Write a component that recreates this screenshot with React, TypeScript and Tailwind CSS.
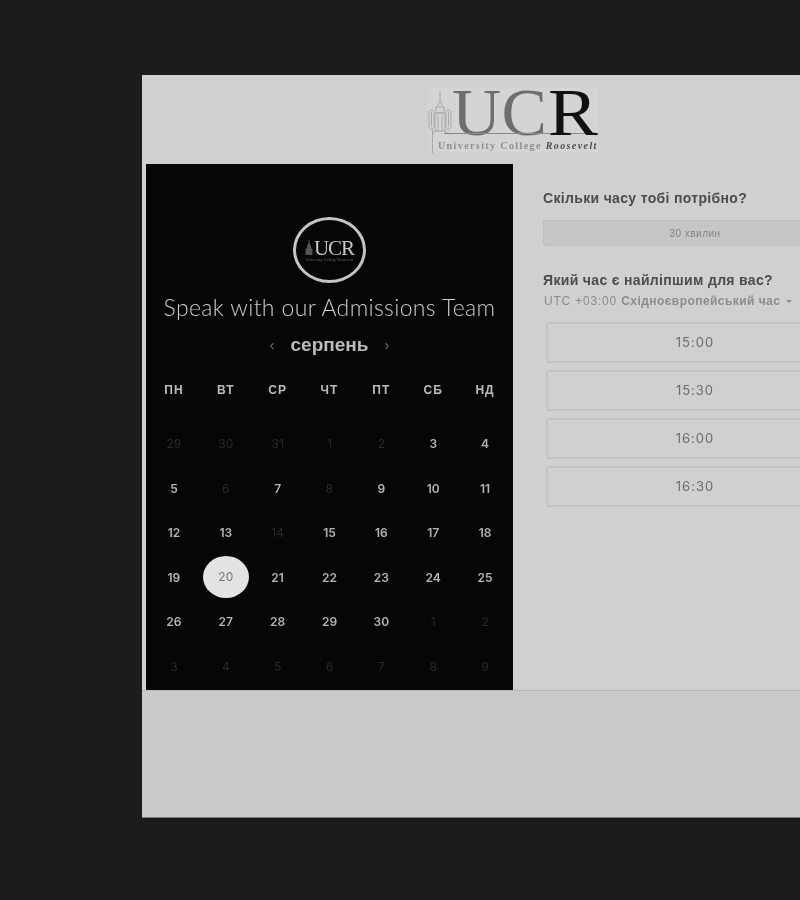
import React from "react";

type Day = { label: number; muted?: boolean; selected?: boolean };

const weekdays = ["ПН", "ВТ", "СР", "ЧТ", "ПТ", "СБ", "НД"];
const times = ["15:00", "15:30", "16:00", "16:30"];

const mutedAugust = [6, 8, 14];

const days: Day[] = [
  ...[29, 30, 31, 1, 2].map((label) => ({ label, muted: true })),
  ...Array.from({ length: 30 - 2 }, (_, i) => {
    const label = i + 3;
    return { label, muted: mutedAugust.includes(label), selected: label === 20 };
  }),
  ...[1, 2, 3, 4, 5, 6, 7, 8, 9].map((label) => ({ label, muted: true })),
];

const TowerIcon = ({ className }: { className: string }) => (
  <svg viewBox="0 0 24 62" className={className} fill="none" stroke="#a0a0a0" strokeWidth="0.8">
    <path d="M12 0v10M9 16l3-7 3 7M8 16h8v6H8zM7 22h10v18H7z" />
    <path d="M1 21c1.500-3 3.500-3 5 0v15c-1.500 3-3.500 3-5 0zM18 21c1.500-3 3.500-3 5 0v15c-1.500 3-3.500 3-5 0z" />
    <path d="M3.500 21v15M20.500 21v15M10 24v16M14 24v16M7 40l-2.500 4M17 40l4 3h3M4.500 38v24" />
  </svg>
);

const HeaderLogo = () => (
  <div className="flex h-[64px] w-[170px] items-start bg-[#d4d4d4]">
    <TowerIcon className="mt-[3px] h-[62px] w-[24px] shrink-0" />
    <div className="flex min-w-0 flex-col">
      <div className="mt-[1px] flex h-[47px] items-center font-['Liberation_Serif',serif] text-[68px] leading-[47px]">
        <span className="tracking-[0.5px] text-[#6e6e6e]">UC</span>
        <span className="ml-[1px] inline-block origin-left scale-x-[1.1] text-[#111111]">R</span>
      </div>
      <div className="-ml-[8px] -mt-[3px] h-px w-[150px] bg-[#8a8a8a]" />
      <div className="-ml-[14px] mt-[7px] whitespace-nowrap font-['Liberation_Serif',serif] text-[10px] font-bold leading-[10px] tracking-[1.4px] text-[#8f8f8f]">
        University College <span className="italic text-[#4c4c4c]">Roosevelt</span>
      </div>
    </div>
  </div>
);

const CalendarPanel = () => (
  <div className="flex h-[526px] w-[367px] shrink-0 flex-col items-center bg-[#060606] pt-[53px]">
    <div className="flex h-[66px] w-[73px] shrink-0 flex-col items-center justify-center rounded-[50%] border-[3px] border-[#c4c4c4]">
      <div className="flex items-center">
        <svg viewBox="0 0 8 15" className="h-[15px] w-[8px]" fill="#555555">
          <path d="M3.500 0h1v3l1.500 3v2l1.500 1v6h-7V9L2 8V6l1.500-3z" />
        </svg>
        <div className="ml-[1px] font-['Liberation_Serif',serif] text-[21px] leading-[18px] tracking-[-1px] text-[#c8c8c8]">
          UCR
        </div>
      </div>
      <div className="mt-[1px] whitespace-nowrap font-['Liberation_Serif',serif] text-[4px] leading-[4px] text-[#666666]">
        University College Roosevelt
      </div>
    </div>
    <div className="mt-[10px] whitespace-nowrap font-['Lato',sans-serif] text-[23px] font-light leading-[28px] tracking-[0.35px] text-[#cccccc]">
      Speak with our Admissions Team
    </div>
    <div className="mt-[12px] flex h-[24px] items-center gap-[16px]">
      <span className="font-['Liberation_Sans',sans-serif] text-[15px] text-[#6f6f6f]">‹</span>
      <span className="font-['Liberation_Sans',sans-serif] text-[19px] font-bold leading-[24px] text-[#bcbcbc]">серпень</span>
      <span className="font-['Liberation_Sans',sans-serif] text-[15px] text-[#6f6f6f]">›</span>
    </div>
    <div className="mt-[25px] grid w-[363px] grid-cols-7">
      {weekdays.map((day) => (
        <div key={day} className="text-center font-['Liberation_Sans',sans-serif] text-[12px] font-bold leading-[16px] tracking-[1px] text-[#bdbdbd]">
          {day}
        </div>
      ))}
    </div>
    <div className="mt-[24px] grid w-[363px] grid-cols-7 auto-rows-[44.500px]">
      {days.map((day, i) => (
        <div key={i} className="flex items-center justify-center">
          {day.selected ? (
            <div className="-mt-[1px] flex h-[42px] w-[46px] items-center justify-center rounded-[50%] bg-[#e3e3e3] font-['Inter',sans-serif] text-[12px] text-[#777777]">
              {day.label}
            </div>
          ) : (
            <span
              className={
                day.muted
                  ? "font-['Inter',sans-serif] text-[12px] text-[#2a2a2a]"
                  : "font-['Inter',sans-serif] text-[12px] font-semibold text-[#b4b4b4]"
              }
            >
              {day.label}
            </span>
          )}
        </div>
      ))}
    </div>
  </div>
);

const SchedulePanel = () => (
  <div className="w-[334px] shrink-0 pl-[30px] pt-[25px]">
    <div className="font-['Liberation_Sans',sans-serif] text-[14px] font-bold leading-[18px] tracking-[0.33px] text-[#4c4c4c]">
      Скільки часу тобі потрібно?
    </div>
    <div className="mt-[13px] flex h-[26px] w-[304px] items-center justify-center rounded-[2px] border border-[#bfbfbf] bg-[#c6c6c6] font-['Liberation_Sans',sans-serif] text-[10px] tracking-[0.5px] text-[#848484]">
      30 хвилин
    </div>
    <div className="mt-[25px] font-['Liberation_Sans',sans-serif] text-[14px] font-bold leading-[18px] tracking-[0.33px] text-[#4c4c4c]">
      Який час є найліпшим для вас?
    </div>
    <div className="ml-[1px] mt-[4px] flex items-center font-['Liberation_Sans',sans-serif] text-[12px] font-bold leading-[16px] tracking-[0.45px] text-[#8c8c8c]">
      <span className="font-normal tracking-[0.8px]">UTC +03:00&nbsp;</span>
      <span>Східноєвропейський час</span>
      <span className="ml-[6px] h-0 w-0 border-x-[3px] border-t-[3px] border-x-transparent border-t-[#8c8c8c]" />
    </div>
    <div className="ml-[3px] mt-[13px] flex w-[298px] flex-col gap-[7px]">
      {times.map((time) => (
        <div key={time} className="flex h-[41px] items-center justify-center rounded-[2px] border-2 border-[#c4c4c4] font-['Inter',sans-serif] text-[13px] tracking-[1px] text-[#6c6c6c]">
          {time}
        </div>
      ))}
    </div>
  </div>
);

export default function App() {
  return (
    <div className="flex h-[900px] w-[800px] overflow-hidden bg-[#1c1c1c] pl-[142px] pt-[75px]">
      <div className="flex h-[743px] w-[800px] shrink-0 flex-col border-b border-[#7c7c7c] bg-[#d0d0d0] blur-[0.4px]">
        <div className="flex h-[89px] w-[742px] shrink-0 justify-center pt-[13px]">
          <HeaderLogo />
        </div>
        <div className="flex shrink-0 border-b border-[#b8b8b8] pl-[4px]">
          <CalendarPanel />
          <SchedulePanel />
        </div>
        <div className="flex-1 bg-[#c9c9c9]" />
      </div>
    </div>
  );
}
